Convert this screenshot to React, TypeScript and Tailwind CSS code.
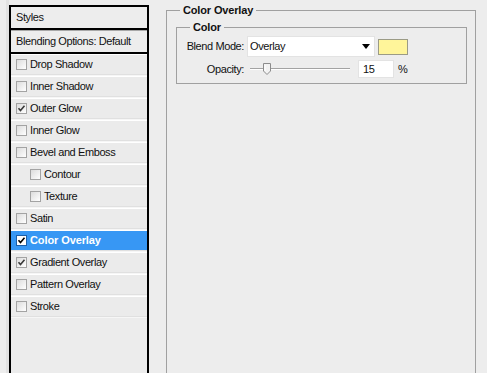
import React from "react";

type StyleRow = { label: string; checked: boolean; nested?: boolean; active?: boolean };

const rows: StyleRow[] = [
  { label: "Drop Shadow", checked: false },
  { label: "Inner Shadow", checked: false },
  { label: "Outer Glow", checked: true },
  { label: "Inner Glow", checked: false },
  { label: "Bevel and Emboss", checked: false },
  { label: "Contour", checked: false, nested: true },
  { label: "Texture", checked: false, nested: true },
  { label: "Satin", checked: false },
  { label: "Color Overlay", checked: true, active: true },
  { label: "Gradient Overlay", checked: true },
  { label: "Pattern Overlay", checked: false },
  { label: "Stroke", checked: false },
];

function Checkbox({ checked, active }: { checked: boolean; active?: boolean }) {
  return (
    <div
      className={
        active
          ? "w-[11px] h-[11px] border border-[#1c5fa8] bg-white flex items-center justify-center shrink-0"
          : "w-[11px] h-[11px] border border-[#a3a3a3] bg-gradient-to-br from-[#dcdcdc] to-[#ffffff] flex items-center justify-center shrink-0"
      }
    >
      {checked && (
        <svg width="9" height="9" viewBox="0 0 9 9">
          <path d="M1.5 4.2 L3.5 6.5 L7.5 1.8" fill="none" stroke={active ? "#000" : "#3a3a3a"} strokeWidth="1.6" />
        </svg>
      )}
    </div>
  );
}

function Row({ row }: { row: StyleRow }) {
  return (
    <div className="h-[22px] flex flex-col border-t border-white">
      <div
        className={
          row.active
            ? "h-[19px] flex items-center bg-[#3797f4] text-white font-bold tracking-[-0.1px]"
            : "h-[19px] flex items-center bg-[#ebebeb]"
        }
      >
        <div className={row.nested ? "pl-[19px] flex items-center gap-[3px]" : "pl-[5px] flex items-center gap-[3px]"}>
          <Checkbox checked={row.checked} active={row.active} />
          <span>{row.label}</span>
        </div>
      </div>
      <div className="h-[2px] border-t border-[#e0e0e0] bg-[#f6f6f6]" />
    </div>
  );
}

export default function App() {
  return (
    <div className="w-[487px] h-[373px] overflow-hidden bg-[#ededed] flex font-['Liberation_Sans',Arial,sans-serif] text-[11px] text-[#111] leading-[13px] tracking-[-0.4px]">
      <div className="w-[9px] shrink-0 border-r-[3px] border-[#e2e2e2]" />

      {/* styles list */}
      <div className="mt-[5px] w-[140px] h-[380px] border-x-2 border-black flex flex-col shrink-0 bg-[#ececec]">
        <div className="h-[25px] border-y-2 border-black flex items-center pl-[5px] bg-[#ededed]">Styles</div>
        <div className="h-[24px] border-t border-[#a8a8a8] border-b-2 border-b-black flex items-center pl-[5px] bg-[#ededed]">
          Blending Options: Default
        </div>
        {rows.map((r) => (
          <Row key={r.label} row={r} />
        ))}
      </div>

      {/* color overlay settings */}
      <fieldset className="ml-[17px] mt-[4px] w-[310px] h-[400px] border border-[#a0a0a0] pl-[9px] pr-[8px] shrink-0">
        <legend className="ml-[4px] px-[3px] font-bold tracking-[-0.15px]">Color Overlay</legend>
        <fieldset className="mt-[4px] w-[291px] border border-[#a0a0a0] pb-[5px]">
          <legend className="ml-[13px] px-[3px] font-bold tracking-[-0.15px]">Color</legend>

          <div className="mt-[2px] flex items-center">
            <div className="w-[67px] text-right">Blend Mode:</div>
            <div className="ml-[3px] w-[128px] h-[21px] bg-white border border-[#e3e3e3] flex items-center justify-between pl-[2px] pr-[4px]">
              <span>Overlay</span>
              <svg width="8" height="5" viewBox="0 0 8 5">
                <path d="M0 0 H8 L4 5 Z" fill="#000" />
              </svg>
            </div>
            <div className="ml-[3px] w-[30px] h-[16px] bg-[#fff59a] border border-[#9b9b86]" />
          </div>

          <div className="mt-[3px] flex items-center">
            <div className="w-[67px] text-right">Opacity:</div>
            <div className="ml-[6px] w-[100px] h-[18px] relative flex items-center">
              <div className="w-full h-[2px] border-t border-[#a3a3a3] bg-white" />
              <svg className="absolute left-[13px] top-[3px]" width="8" height="12" viewBox="0 0 8 12">
                <path d="M0.5 0.5 H7.5 V8 L4 11.5 L0.5 8 Z" fill="#f2f2f2" stroke="#8c8c8c" />
                <path d="M2 2 V8" stroke="#ffffff" />
              </svg>
            </div>
            <div className="ml-[8px] w-[36px] h-[18px] bg-white border border-[#e3e3e3] flex items-center pl-[4px]">15</div>
            <span className="ml-[4px]">%</span>
          </div>
        </fieldset>
      </fieldset>
    </div>
  );
}
